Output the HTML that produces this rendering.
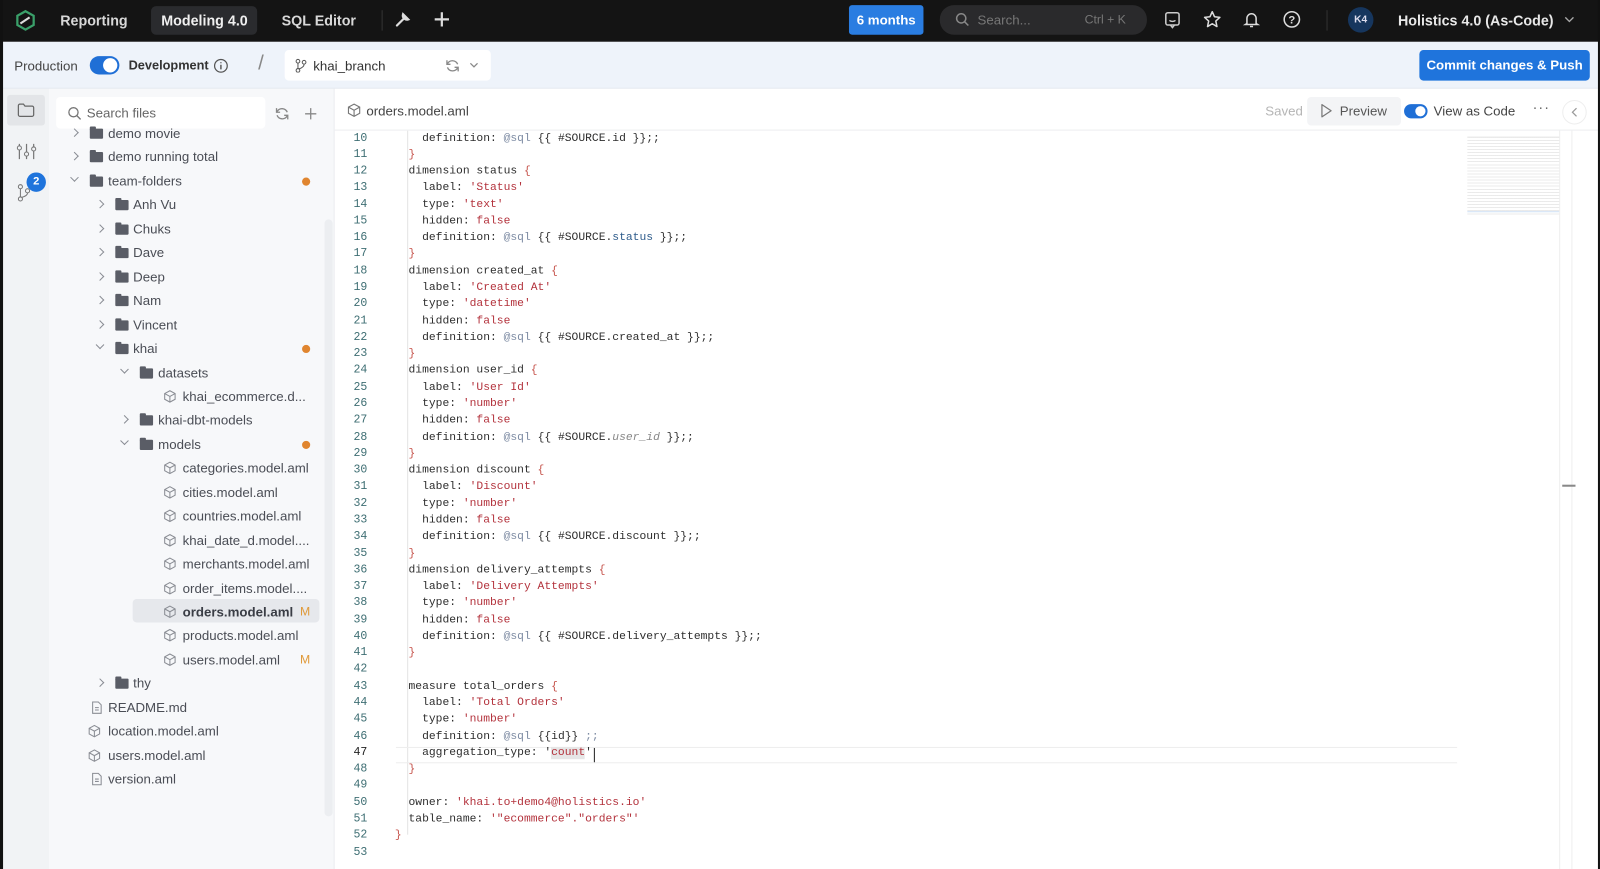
<!DOCTYPE html>
<html><head><meta charset="utf-8">
<style>
*{box-sizing:border-box;margin:0;padding:0}
body{width:1600px;height:869px;overflow:hidden;background:#fff;font-family:"Liberation Sans",sans-serif;position:relative}
#wrap{position:absolute;left:0;top:0;width:1568px;height:852px;transform:scale(1.0204);transform-origin:0 0;overflow:hidden;background:#fff}
.abs{position:absolute}
#frameL{left:0;top:0;width:3px;height:852px;background:#111}
#frameR{left:1566px;top:0;width:2px;height:852px;background:#111}
#top{left:0;top:0;width:1568px;height:41px;background:#141414;color:#d8d8d8;font-size:14px;font-weight:bold}
#top .t{position:absolute;top:12px}
#sub{left:3px;top:41px;width:1563px;height:46px;background:#eef3fa;border-bottom:1px solid #e3e8ef}
#rail{left:3px;top:87px;width:45px;height:765px;background:#f1f3f5}
#files{left:48px;top:87px;width:280px;height:765px;background:#f7f8fa;border-right:1px solid #e8eaee;overflow:hidden}
.row{position:absolute;height:23px;font-size:13px;color:#4a4d55;line-height:23px;white-space:nowrap}
.chev{position:absolute;top:8px;width:6px;height:6px;border-right:1.3px solid #8a8d94;border-bottom:1.3px solid #8a8d94}
.fold{position:absolute;top:7px;width:13px;height:10px;background:#5a5d66;border-radius:1px}
.fold:before{content:"";position:absolute;left:0;top:-2px;width:6px;height:3px;background:#5a5d66;border-radius:1px 1px 0 0}
.dot{position:absolute;left:248px;width:8px;height:8px;border-radius:50%;background:#e0852f;top:8px}
.cube{position:absolute;top:5px;width:13px;height:13px}
.M{position:absolute;left:246px;color:#e09a3a;font-size:12px}
#editor{left:328px;top:87px;width:1238px;height:765px;background:#fff}
#code{left:328px;top:128px;width:1102px;height:724px;overflow:hidden}
.ln{position:absolute;left:0;width:32px;text-align:right;font-family:"Liberation Mono",monospace;font-size:11.3px;color:#3e6e73}
.cl{position:absolute;left:59px;font-family:"Liberation Mono",monospace;font-size:11.1px;color:#2d2d2d;white-space:pre}
.s{color:#b3323c}.b{color:#c5524a}.a{color:#7d8ba3}.p{color:#2c5a8a}.i{color:#888;font-style:italic}
</style></head><body>
<div id="wrap">
<div id="top" class="abs">
  <svg class="abs" style="left:14px;top:9px" width="22" height="22" viewBox="0 0 22 22"><path d="M11 2 L19 6.5 V15.5 L11 20 L3 15.5 V6.5 Z" fill="none" stroke="#3aa06a" stroke-width="2.2"/><path d="M6 14 L15 8" stroke="#ddd" stroke-width="2"/></svg>
  <span class="t" style="left:59px">Reporting</span>
  <div class="abs" style="left:148px;top:6px;width:104px;height:28px;background:#2a2b2e;border-radius:5px"></div>
  <span class="t" style="left:158px;color:#f0f0f0">Modeling 4.0</span>
  <span class="t" style="left:276px">SQL Editor</span>
  <div class="abs" style="left:374px;top:10px;width:1px;height:20px;background:#333"></div>
  <svg class="abs" style="left:386px;top:11px" width="17" height="17" viewBox="0 0 17 17"><path d="M3 14 L10 7 M9 3 A4 4 0 0 0 14 8 L12 6 L11 5 Z" stroke="#ddd" stroke-width="2.2" fill="#ddd" stroke-linecap="round"/></svg>
  <svg class="abs" style="left:425px;top:11px" width="16" height="16"><path d="M8 1V15M1 8H15" stroke="#ddd" stroke-width="2.2"/></svg>
  <div class="abs" style="left:832px;top:5px;width:73px;height:29px;background:#2a7de1;border-radius:3px;color:#fff;font-size:13px;line-height:29px;text-align:center">6 months</div>
  <div class="abs" style="left:921px;top:5px;width:203px;height:29px;background:#2a2a2c;border-radius:14px"></div>
  <svg class="abs" style="left:936px;top:12px" width="14" height="14"><circle cx="6" cy="6" r="4.5" stroke="#888" stroke-width="1.5" fill="none"/><path d="M9.5 9.5L13 13" stroke="#888" stroke-width="1.5"/></svg>
  <span class="t" style="left:958px;font-weight:normal;color:#777;font-size:13px">Search...</span>
  <span class="t" style="left:1063px;font-weight:normal;color:#777;font-size:12px">Ctrl + K</span>
  <svg class="abs" style="left:1141px;top:11px" width="17" height="18"><rect x="1.5" y="1.5" width="13" height="12" rx="2" stroke="#ccc" stroke-width="1.5" fill="none"/><path d="M6 13.5 L8 16 L10 13.5" stroke="#ccc" stroke-width="1.5" fill="none"/><path d="M5 9Q8 11 11 9" stroke="#ccc" stroke-width="1.4" fill="none"/></svg>
  <svg class="abs" style="left:1179px;top:10px" width="18" height="18" viewBox="0 0 18 18"><path d="M9 1.5L11.2 6.4 16.5 7 12.5 10.6 13.6 16 9 13.3 4.4 16 5.5 10.6 1.5 7 6.8 6.4Z" stroke="#ddd" stroke-width="1.5" fill="none" stroke-linejoin="round"/></svg>
  <svg class="abs" style="left:1218px;top:10px" width="17" height="18"><path d="M4 13V8A4.5 4.5 0 0 1 13 8V13L14.5 14H2.5Z" stroke="#ddd" stroke-width="1.5" fill="none"/><path d="M7 16H10" stroke="#ddd" stroke-width="1.5"/></svg>
  <svg class="abs" style="left:1257px;top:10px" width="18" height="18"><circle cx="9" cy="9" r="7.5" stroke="#ddd" stroke-width="1.5" fill="none"/><text x="9" y="13" font-size="11" text-anchor="middle" fill="#ddd" font-family="Liberation Sans" font-weight="bold">?</text></svg>
  <div class="abs" style="left:1300px;top:10px;width:1px;height:20px;background:#333"></div>
  <div class="abs" style="left:1321px;top:7px;width:25px;height:25px;border-radius:50%;background:#16365e;color:#dde;font-size:10px;line-height:25px;text-align:center">K4</div>
  <span class="t" style="left:1370px;color:#e8e8e8">Holistics 4.0 (As-Code)</span>
  <svg class="abs" style="left:1533px;top:16px" width="10" height="8"><path d="M1 1L5 5 9 1" stroke="#aaa" stroke-width="1.3" fill="none"/></svg>
</div>

<div id="sub" class="abs">
  <span class="abs" style="left:11px;top:16px;font-size:13px;color:#444">Production</span>
  <div class="abs" style="left:85px;top:14px;width:29px;height:18px;background:#1f6fd6;border-radius:9px"><div class="abs" style="left:13px;top:2px;width:14px;height:14px;border-radius:50%;background:#fff"></div></div>
  <span class="abs" style="left:123px;top:16px;font-size:12.5px;color:#333;font-weight:bold">Development</span>
  <svg class="abs" style="left:206px;top:16px" width="15" height="15"><circle cx="7.5" cy="7.5" r="6.2" stroke="#555" stroke-width="1.2" fill="none"/><path d="M7.5 6.5V11M7.5 4V5" stroke="#555" stroke-width="1.4"/></svg>
  <span class="abs" style="left:250px;top:10px;font-size:20px;color:#888">/</span>
  <div class="abs" style="left:276px;top:8px;width:202px;height:30px;background:#fff;border-radius:4px"></div>
  <svg class="abs" style="left:286px;top:16px" width="12" height="14"><circle cx="3" cy="3" r="1.8" stroke="#555" fill="none"/><circle cx="3" cy="12" r="1.8" stroke="#555" fill="none"/><circle cx="9" cy="4" r="1.8" stroke="#555" fill="none"/><path d="M3 5V10M9 6Q9 9 4 10.5" stroke="#555" fill="none"/></svg>
  <span class="abs" style="left:304px;top:16px;font-size:13px;color:#333">khai_branch</span>
  <svg class="abs" style="left:433px;top:16px" width="15" height="15"><path d="M12.5 6A5.5 5.5 0 0 0 2.5 5.5M2.5 9A5.5 5.5 0 0 0 12.5 9.5" stroke="#888" stroke-width="1.3" fill="none"/><path d="M2 2V6H5.5M13 13V9H9.5" stroke="#888" stroke-width="1.3" fill="none"/></svg>
  <svg class="abs" style="left:457px;top:20px" width="9" height="6"><path d="M1 1L4.5 4.5 8 1" stroke="#888" stroke-width="1.2" fill="none"/></svg>
  <div class="abs" style="left:1388px;top:8px;width:167px;height:30px;background:#1f74dc;border-radius:4px;color:#fff;font-size:13px;font-weight:bold;line-height:30px;text-align:center">Commit changes &amp; Push</div>
</div>

<div id="rail" class="abs">
  <div class="abs" style="left:4px;top:6px;width:37px;height:30px;background:#e3e5e8;border-radius:3px"></div>
  <svg class="abs" style="left:14px;top:14px" width="17" height="14"><path d="M1 2.5A1.5 1.5 0 0 1 2.5 1H6L7.5 3H14.5A1.5 1.5 0 0 1 16 4.5V11.5A1.5 1.5 0 0 1 14.5 13H2.5A1.5 1.5 0 0 1 1 11.5Z" stroke="#666" stroke-width="1.2" fill="none"/></svg>
  <svg class="abs" style="left:13px;top:53px" width="20" height="17"><path d="M3 1V16M10 1V16M17 1V16" stroke="#777" stroke-width="1.2"/><circle cx="3" cy="5" r="2" fill="#f1f3f5" stroke="#777"/><circle cx="10" cy="11" r="2" fill="#f1f3f5" stroke="#777"/><circle cx="17" cy="6" r="2" fill="#f1f3f5" stroke="#777"/></svg>
  <svg class="abs" style="left:14px;top:93px" width="14" height="18"><circle cx="3" cy="3" r="2" stroke="#777" fill="none"/><circle cx="3" cy="15" r="2" stroke="#777" fill="none"/><circle cx="10" cy="7" r="2" stroke="#777" fill="none"/><path d="M3 5V13M10 9Q10 12 4 13.5" stroke="#777" fill="none"/></svg>
  <div class="abs" style="left:23px;top:82px;width:19px;height:19px;border-radius:50%;background:#1f74dc;color:#fff;font-size:11px;font-weight:bold;line-height:19px;text-align:center">2</div>
</div>

<div id="files" class="abs">
  <div class="abs" style="left:7px;top:8px;width:205px;height:31px;background:#fff;border-radius:4px"></div>
  <svg class="abs" style="left:18px;top:17px" width="14" height="14"><circle cx="6" cy="6" r="4.5" stroke="#777" stroke-width="1.3" fill="none"/><path d="M9.3 9.3L13 13" stroke="#777" stroke-width="1.3"/></svg>
  <span class="abs" style="left:37px;top:16px;font-size:13px;color:#666">Search files</span>
  <svg class="abs" style="left:221px;top:17px" width="15" height="15"><path d="M12.5 6A5.5 5.5 0 0 0 2.5 5.5M2.5 9A5.5 5.5 0 0 0 12.5 9.5" stroke="#888" stroke-width="1.3" fill="none"/><path d="M2 2V6H5.5M13 13V9H9.5" stroke="#888" stroke-width="1.3" fill="none"/></svg>
  <svg class="abs" style="left:250px;top:18px" width="13" height="13"><path d="M6.5 1V12M1 6.5H12" stroke="#888" stroke-width="1.3"/></svg>
  <div class="abs" style="left:270px;top:128px;width:8px;height:585px;background:#eceef1;border-radius:4px"></div>
  <div class="abs" style="left:82px;top:500px;width:183px;height:23px;background:#e6e8ec;border-radius:4px"></div>
  <div id="tree"></div>
</div>

<div id="editor" class="abs">
  <svg class="abs" style="left:12px;top:14px" width="14" height="14" viewBox="0 0 14 14"><path d="M7 1L12.5 4V10L7 13L1.5 10V4Z M1.5 4L7 7L12.5 4 M7 7V13" stroke="#777" stroke-width="1.1" fill="none"/></svg>
  <span class="abs" style="left:31px;top:14px;font-size:13px;color:#444">orders.model.aml</span>
  <div class="abs" style="left:0;top:40px;width:1238px;height:1px;background:#eceef0"></div>
  <span class="abs" style="left:912px;top:14px;font-size:13px;color:#b5b5b5">Saved</span>
  <div class="abs" style="left:953px;top:8px;width:92px;height:28px;background:#f3f4f6;border-radius:4px"></div>
  <svg class="abs" style="left:966px;top:14px" width="12" height="15"><path d="M1.5 1.5L10.5 7.5 1.5 13.5Z" stroke="#777" stroke-width="1.2" fill="none" stroke-linejoin="round"/></svg>
  <span class="abs" style="left:985px;top:14px;font-size:13px;color:#555">Preview</span>
  <div class="abs" style="left:1048px;top:15px;width:23px;height:14px;background:#1f6fd6;border-radius:7px"><div class="abs" style="left:11px;top:2px;width:10px;height:10px;border-radius:50%;background:#fff"></div></div>
  <span class="abs" style="left:1077px;top:14px;font-size:13px;color:#444">View as Code</span>
  <span class="abs" style="left:1174px;top:10px;font-size:14px;color:#666;letter-spacing:1px">···</span>
  <div class="abs" style="left:1203px;top:11px;width:24px;height:24px;border-radius:50%;border:1px solid #eee;background:#fff"></div>
  <svg class="abs" style="left:1212px;top:18px" width="6" height="10"><path d="M5 1L1 5 5 9" stroke="#999" stroke-width="1.2" fill="none"/></svg>
  <div class="abs" style="left:1200px;top:41px;width:1px;height:724px;background:#eee"></div>
  <div class="abs" style="left:1212px;top:41px;width:1px;height:724px;background:#eee"></div>
  <div class="abs" style="left:1203px;top:388px;width:13px;height:2px;background:#888"></div>
  <div class="abs" style="left:1110px;top:45px;width:90px;height:80px;opacity:.6;background:repeating-linear-gradient(#fff 0 2px,#ddd 2px 3px)"></div>
  <div class="abs" style="left:1110px;top:120px;width:90px;height:1px;background:#cfe0f5"></div>
</div>

<div id="code" class="abs"></div>

<div id="frameL" class="abs"></div><div id="frameR" class="abs"></div>
</div>
<script>
var tree=[
 [0,'f','demo movie',0,1],[0,'f','demo running total',0,1],[0,'f','team-folders',1,0],
 [1,'f','Anh Vu',0,1],[1,'f','Chuks',0,1],[1,'f','Dave',0,1],[1,'f','Deep',0,1],[1,'f','Nam',0,1],[1,'f','Vincent',0,1],[1,'f','khai',1,0],
 [2,'f','datasets',0,0],[3,'d','khai_ecommerce.d...',0],[2,'f','khai-dbt-models',0,1],[2,'f','models',1,0],
 [3,'c','categories.model.aml'],[3,'c','cities.model.aml'],[3,'c','countries.model.aml'],[3,'c','khai_date_d.model....'],[3,'c','merchants.model.aml'],[3,'c','order_items.model....'],[3,'c','orders.model.aml','M'],[3,'c','products.model.aml'],[3,'c','users.model.aml','M'],
 [1,'f','thy',0,1],[0,'r','README.md'],[0,'c','location.model.aml'],[0,'c','users.model.aml'],[0,'r','version.aml']];
var h='',cube='<svg class="cube" style="left:LEFTpx" viewBox="0 0 14 14"><path d="M7 1L12.5 4V10L7 13L1.5 10V4Z M1.5 4L7 7L12.5 4 M7 7V13" stroke="#8a8d94" stroke-width="1.1" fill="none"/></svg>';
tree.forEach(function(t,i){
 var y=32+i*23.45, lv=t[0], ty=t[1];
 var cx=24+lv*24.5, fx=40+lv*24.5, tx=58+lv*24.5;
 var r='<div class="row" style="top:'+y+'px;left:0;width:280px">';
 if(ty=='f'){
  var open=!t[4];
  r+='<div class="chev" style="left:'+(cx-2)+'px;transform:rotate('+(open?45:-45)+'deg);top:'+(open?5:8)+'px"></div>';
  r+='<div class="fold" style="left:'+fx+'px"></div>';
  r+='<span class="abs" style="left:'+tx+'px">'+t[2]+'</span>';
  if(t[3]) r+='<div class="dot"></div>';
 } else if(ty=='c'||ty=='d'){
  var ix=lv==3?112:38, x2=lv==3?131:58;
  r+=cube.replace('LEFT',ix);
  var bold=t[2]=='orders.model.aml'&&lv==3;
  r+='<span class="abs" style="left:'+x2+'px;'+(bold?'font-weight:bold;color:#3a3d45':'')+'">'+t[2]+'</span>';
  if(t[3]) r+='<span class="M">M</span>';
 } else {
  r+='<svg class="cube" style="left:40px" viewBox="0 0 14 14"><path d="M3 1H9L12 4V13H3Z M5.5 7H9.5M5.5 9.5H9.5" stroke="#8a8d94" stroke-width="1.1" fill="none"/></svg>';
  r+='<span class="abs" style="left:58px">'+t[2]+'</span>';
 }
 h+=r+'</div>';
});
document.getElementById('tree').innerHTML=h;

function S(x){return '<span class="s">'+x+'</span>'}
function B(x){return '<span class="b">'+x+'</span>'}
function dim(name,label,type,src,it){
 return ['  dimension '+name+' '+B('{'),'    label: '+S("'"+label+"'"),'    type: '+S("'"+type+"'"),'    hidden: '+S('false'),
 '    definition: <span class="a">@sql</span> {{ #SOURCE.'+(it?'<span class="i">'+src+'</span>':(src=='status'?'<span class="p">status</span>':src))+' }};;','  '+B('}')];
}
var L=['    definition: <span class="a">@sql</span> {{ #SOURCE.id }};;','  '+B('}')];
L=L.concat(dim('status','Status','text','status'),dim('created_at','Created At','datetime','created_at'),dim('user_id','User Id','number','user_id',1),dim('discount','Discount','number','discount'),dim('delivery_attempts','Delivery Attempts','number','delivery_attempts'));
L=L.concat(['','  measure total_orders '+B('{'),'    label: '+S("'Total Orders'"),'    type: '+S("'number'"),'    definition: <span class="a">@sql</span> {{id}} <span class="a">;;</span>',
"    aggregation_type: '<span class=\"s\" style=\"background:#e6e6e6\">count</span>'",'  '+B('}'),'','  owner: '+S("'khai.to+demo4@holistics.io'"),'  table_name: '+S("'\"ecommerce\".\"orders\"'"),B('}'),'']);
var c='',lh=16.28,off=1.5;
c+='<div class="abs" style="left:71px;top:0;width:1px;height:690px;background:#e4e4e4"></div>';
c+='<div class="abs" style="left:60px;top:'+(off+37*lh)+'px;width:1040px;height:'+lh+'px;border-top:1px solid #eee;border-bottom:1px solid #eee"></div>';
L.forEach(function(s,i){
 var y=off+i*lh;
 c+='<div class="ln" style="top:'+y+'px;'+(i==37?'color:#222':'')+'">'+(i+10)+'</div>';
 c+='<div class="cl" style="top:'+y+'px">'+s+'</div>';
});
c+='<div class="abs" style="left:254px;top:'+(off+37*lh+1)+'px;width:1px;height:14px;background:#222"></div>';
document.getElementById('code').innerHTML=c;
</script>
</body></html>
